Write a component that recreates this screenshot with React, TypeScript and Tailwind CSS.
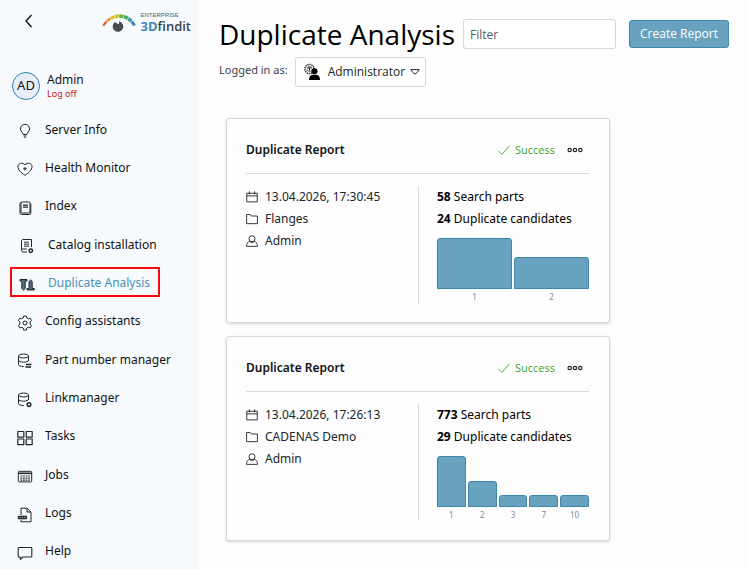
import type { ReactNode } from 'react';

type IconProps = { children: ReactNode; className?: string; width?: string };

function Icon({ children, className = 'size-4', width = '1' }: IconProps) {
  return (
    <svg
      viewBox="0 0 16 16"
      className={className}
      fill="none"
      stroke="currentColor"
      strokeWidth={width}
      strokeLinejoin="round"
      aria-hidden="true"
    >
      {children}
    </svg>
  );
}

const database = (
  <>
    <ellipse cx="6.5" cy="3" rx="5" ry="2" />
    <path d="M1.5 3v8.5c0 1.2 2 2 5 2h.5M11.5 3v5M1.5 7.2c0 1.2 2.2 2 5 2s5-.8 5-2" />
  </>
);

const navItems: { label: string; icon: ReactNode; nested?: boolean; active?: boolean }[] = [
  {
    label: 'Server Info',
    icon: <path d="M6.2 11.5C6.2 9.5 3.4 8.8 3.4 5.9a4.6 4.6 0 0 1 9.2 0c0 2.9-2.8 3.6-2.8 5.6zM6.6 13h2.8M7.3 14.4h1.4" />,
  },
  {
    label: 'Health Monitor',
    icon: <path d="M8 14.3C4 11.6 1 9 1 5.6 1 2 5.6 1 8 3.8 10.4 1 15 2 15 5.6c0 3.4-3 6-7 8.7zM8 6v3.6M6.2 7.8h3.6" />,
  },
  {
    label: 'Index',
    icon: (
      <>
        <rect x="4" y="2" width="9" height="11" rx="1" />
        <path d="M4 2.5c-.8 0-1 .6-1 1.2V13c0 .9.6 1.5 1.4 1.5h8.2c.8 0 1.2-.5 1.2-1.3V3.5" />
        <path d="M6 5.2h5M6 7.2h5" strokeWidth="1.3" />
      </>
    ),
  },
  {
    label: 'Catalog installation',
    nested: true,
    icon: (
      <>
        <path d="M8 14H4c-1 0-1.5-.6-1.5-1.5V3.2c0-1 .5-1.7 1.5-1.7h8.5V9M2.5 12.2c0-.8.6-1.2 1.5-1.2h4" />
        <path d="M5 4.2h5M5 6.2h5M5 8.2h5" />
        <circle cx="11.8" cy="12.8" r="1.7" strokeWidth="1.5" />
      </>
    ),
  },
  {
    label: 'Duplicate Analysis',
    nested: true,
    active: true,
    icon: (
      <>
        <path d="M1 3.5h7V5H6.2v7.5L4.5 14l-1.7-1.5V5H1z" fill="#4f7489" />
        <path d="M8 14v-1.5h2v-7L11.6 4l1.6 1.5v7h2V14z" fill="#4f7489" />
      </>
    ),
  },
  {
    label: 'Config assistants',
    icon: (
      <>
        <path d="M6.6 1h2.8l.4 2 1.5.8 1.9-.7 1.4 2.4-1.5 1.4v2.2l1.5 1.4-1.4 2.4-1.9-.7-1.5.8-.4 2H6.6l-.4-2-1.5-.8-1.9.7-1.4-2.4 1.5-1.4V6.9L1.4 5.5l1.4-2.4 1.9.7L6.2 3z" />
        <circle cx="8" cy="8" r="2" />
      </>
    ),
  },
  {
    label: 'Part number manager',
    icon: (
      <>
        {database}
        <path d="M9 11.5h5.5M8.5 14h5.5" strokeWidth="1.5" />
      </>
    ),
  },
  {
    label: 'Linkmanager',
    icon: (
      <>
        {database}
        <circle cx="12" cy="12.6" r="1.8" strokeWidth="1.5" />
      </>
    ),
  },
  {
    label: 'Tasks',
    icon: <path d="M.8 1.5h6v5.6h-6zM9.2 1.5h6v5.6h-6zM.8 9h6v5.6h-6zM9.2 9h6v5.6h-6z" strokeWidth="1.2" />,
  },
  {
    label: 'Jobs',
    icon: (
      <>
        <rect x="1.3" y="3.3" width="13.4" height="10.6" rx="1" />
        <path d="M1.3 5.3h13.4" strokeWidth="1.6" />
        <path d="M3.4 8h9.4M3.4 10.1h9.4M3.4 12.2h9.4" strokeWidth="1.2" strokeDasharray="1.8 .8" />
      </>
    ),
  },
  {
    label: 'Logs',
    icon: (
      <>
        <path d="M4 8V1.2h6L14 5v9.8H4V13M10 1.2V5h4" />
        <rect x="1.2" y="9.2" width="8.4" height="2.6" fill="currentColor" />
        <path d="M2.4 10.5h1.2M4.8 10.5h1.2M7.2 10.5h1.2" stroke="#9aa4aa" />
      </>
    ),
  },
  {
    label: 'Help',
    icon: <path d="M2 2.5h12c.5 0 .8.3.8.8v7.9c0 .5-.3.8-.8.8H6l-2.6 2.4V12H2c-.5 0-.8-.3-.8-.8V3.3c0-.5.3-.8.8-.8z" strokeWidth="1.1" />,
  },
];

const reports = [
  {
    date: '13.04.2026, 17:30:45',
    source: 'Flanges',
    user: 'Admin',
    parts: 58,
    candidates: 24,
    bars: [
      { label: '1', value: 51 },
      { label: '2', value: 32 },
    ],
  },
  {
    date: '13.04.2026, 17:26:13',
    source: 'CADENAS Demo',
    user: 'Admin',
    parts: 773,
    candidates: 29,
    bars: [
      { label: '1', value: 51 },
      { label: '2', value: 26 },
      { label: '3', value: 12 },
      { label: '7', value: 12 },
      { label: '10', value: 12 },
    ],
  },
];

function Logo() {
  return (
    <a href="#" className="flex items-start gap-1" aria-label="Enterprise 3Dfindit">
      <svg viewBox="0 0 34 20" className="mt-px h-5 w-[34px]" fill="none" strokeWidth="3.6" aria-hidden="true">
        <path d="M1.3 12.8Q2.6 10.4 4.6 8.5" stroke="#e8502e" strokeWidth="2" />
        <path d="M5 8.2Q6.6 6.6 8.4 5.5" stroke="#f08a24" strokeWidth="2.6" />
        <path d="M8.9 5.2Q10.7 4.2 12.6 3.6" stroke="#e5bd22" strokeWidth="3" />
        <path d="M13.1 3.4Q15 3 16.8 3" stroke="#b8c92c" />
        <path d="M17.3 3Q19.4 3 21.4 3.5" stroke="#6cb544" />
        <path d="M21.9 3.6Q24 4.3 25.8 5.3" stroke="#45a860" />
        <path d="M26.2 5.6Q28 6.7 29.3 8.1" stroke="#3f9d9c" />
        <path d="M29.6 8.5Q31.4 10.3 32.4 12.6" stroke="#3d86b5" strokeWidth="3" />
        <path d="M17 8.3v3l-2-.8-2-1.4A5.3 5.3 0 1 0 17 8.3z" fill="#464c52" />
      </svg>
      <span className="flex flex-col">
        <span className="font-['Liberation_Sans',sans-serif] text-[6px] leading-[7px] text-[#5b6166]">ENTERPRISE</span>
        <span className="font-['Open_Sans',sans-serif] text-[13px] leading-[14px] font-semibold text-[#3c4248]">
          <span className="font-bold text-[#3f8ab8]">3D</span>findit
        </span>
      </span>
    </a>
  );
}

function Sidebar() {
  return (
    <aside className="flex w-[197px] shrink-0 flex-col border-r border-[#f1f5f7] bg-[#f6fafc]">
      <div className="flex h-[34px] items-start justify-between pt-3 pr-[5px] pl-[21px]">
        <button type="button" aria-label="Back" className="pt-px">
          <Icon className="size-4" width="1.4">
            <path d="M10.5 2 5 8l5.5 6" />
          </Icon>
        </button>
        <Logo />
      </div>

      {/* User */}
      <div className="mt-[38px] flex items-center gap-[7px] pl-3">
        <span className="flex size-7 items-center justify-center rounded-full border border-[#2f80b0] bg-[#e8eef8] text-[13px]">
          AD
        </span>
        <div className="flex flex-col items-start">
          <span className="text-xs leading-4">Admin</span>
          <button type="button" className="text-[9px] leading-3 text-[#c8150f]">
            Log off
          </button>
        </div>
      </div>

      {/* Navigation */}
      <nav className="mt-[11px] flex-1">
        <ul className="flex h-full flex-col justify-between">
          {navItems.map((item) => (
            <li key={item.label} className="flex h-9 items-center">
              <a
                href="#"
                className={
                  item.active
                    ? 'ml-[10px] flex h-[30px] w-[150px] items-center border-2 border-[#f5090d] pl-[7px] text-[#4a90b8]'
                    : item.nested
                      ? 'flex items-center pl-[19px]'
                      : 'flex items-center pl-[17px]'
                }
              >
                <Icon className={item.nested ? 'mt-1 mr-[13px] size-4 shrink-0 text-[#20262a]' : 'mt-1 mr-3 size-4 shrink-0 text-[#20262a]'}>
                  {item.icon}
                </Icon>
                <span className="pt-px text-xs leading-5 whitespace-nowrap">{item.label}</span>
              </a>
            </li>
          ))}
        </ul>
      </nav>
    </aside>
  );
}

function ReportCard({ report }: { report: (typeof reports)[number] }) {
  return (
    <article className="rounded-[3px] border border-[#d6d8d9] bg-[#fdfdfd] pr-5 pb-[19px] pl-[19px] shadow-[0_1px_3px_rgba(0,0,0,0.16)]">
      <header className="flex items-center border-b border-[#d6d8d9] pt-5 pb-3">
        <h2 className="flex-1 text-xs leading-[22px] font-semibold">Duplicate Report</h2>
        <span className="flex items-center gap-1 font-['Open_Sans',sans-serif] text-[11px] leading-[22px] text-[#38a71c]">
          <Icon className="size-[14px]">
            <path d="M1.5 9 5.5 13 14.5 3" />
          </Icon>
          Success
        </span>
        <button type="button" aria-label="More" className="mr-[6px] ml-3">
          <svg viewBox="0 0 16 6" className="h-[6px] w-4" fill="none" stroke="#22262a" strokeWidth="1.2" aria-hidden="true">
            <circle cx="2.7" cy="3" r="1.7" />
            <circle cx="8" cy="3" r="1.7" />
            <circle cx="13.3" cy="3" r="1.7" />
          </svg>
        </button>
      </header>

      <div className="mt-3 flex text-xs leading-[22px]">
        <ul className="flex-1 border-r border-[#d6d8d9] text-[#20262a]">
          <li className="flex items-center gap-[7px]">
            <Icon className="size-3" width="1.2">
              <path d="M1 3h14v11.5H1zM1 6.5h14M4.5 .5v4M11.5 .5v4" />
            </Icon>
            {report.date}
          </li>
          <li className="flex items-center gap-[7px]">
            <Icon className="size-3" width="1.2">
              <path d="M.8 2h4.7L7 4h8.2v10.2H.8z" />
            </Icon>
            {report.source}
          </li>
          <li className="flex items-center gap-[7px]">
            <Icon className="size-3" width="1.2">
              <circle cx="8" cy="5" r="4" />
              <path d="M5 8.5C2 9.2.8 11 .8 15.2h14.4c0-4.2-1.2-6-4.2-6.7M5 8.5c1.5 2 4.5 2 6 0" />
            </Icon>
            {report.user}
          </li>
        </ul>

        <div className="w-[170px] pl-[18px] text-black">
          <p>
            <b>{report.parts}</b> Search parts
          </p>
          <p>
            <b>{report.candidates}</b> Duplicate candidates
          </p>
          <div className="mt-2 flex items-end gap-[2px]">
            {report.bars.map((bar) => (
              <div key={bar.label} className="flex-1">
                <div
                  className="rounded-t-[3px] border border-[#3d86ae] bg-[#68a2bf]"
                  style={{ height: bar.value }}
                />
                <div className="mt-px text-center text-[8px] leading-[13px] text-[#868c90]">{bar.label}</div>
              </div>
            ))}
          </div>
        </div>
      </div>
    </article>
  );
}

export default function App() {
  return (
    <div className="flex min-h-screen bg-[#fdfdfd] font-['Noto_Sans',sans-serif] text-[#101214]">
      <Sidebar />

      <main className="min-w-0 flex-1">
        <div className="flex items-center pt-[19px] pr-[21px] pl-[22px]">
          <h1 className="mr-2 font-['Open_Sans',sans-serif] text-[28px] leading-[30px] font-medium whitespace-nowrap text-black">
            Duplicate Analysis
          </h1>
          <input
            type="text"
            aria-label="Filter"
            placeholder="Filter"
            className="h-[30px] min-w-0 flex-1 rounded-[3px] border border-[#d6d8d9] bg-white px-[6px] font-['Open_Sans',sans-serif] text-xs placeholder:text-[#555b60]"
          />
          <button
            type="button"
            className="ml-[13px] h-7 w-[100px] rounded-[3px] border border-[#3d8ab0] bg-[#68a2bf] font-['Open_Sans',sans-serif] text-xs font-medium whitespace-nowrap text-white"
          >
            Create Report
          </button>
        </div>

        <div className="mt-2 flex items-start pl-[22px]">
          <label htmlFor="role" className="mr-[7px] pt-1 text-[11px] leading-[18px] text-[#3c4248]">
            Logged in as:
          </label>
          <div className="relative">
            <svg viewBox="0 0 18 18" className="pointer-events-none absolute top-[6px] left-2 size-[18px]" aria-hidden="true">
              <circle cx="6.5" cy="6" r="4.6" fill="none" stroke="#222" strokeWidth="1.5" strokeDasharray="1.3 .8" />
              <circle cx="6.5" cy="6" r="2.6" fill="none" stroke="#555" strokeWidth=".8" />
              <path d="M5 4.8h3M6.5 4.8v3" stroke="#222" />
              <circle cx="11.5" cy="8.2" r="3" />
              <path d="M6 17c0-3.2 1.4-4.7 3.5-5.2h4c2.1.5 3.5 2 3.5 5.2z" />
            </svg>
            <select
              id="role"
              className="h-[30px] w-[131px] appearance-none rounded-[3px] border border-[#d6d8d9] bg-white pr-4 pl-8 font-['Open_Sans',sans-serif] text-xs text-[#20262a]"
            >
              <option>Administrator</option>
            </select>
            <svg viewBox="0 0 10 6" className="pointer-events-none absolute top-3 right-[6px] h-[6px] w-[10px]" fill="none" stroke="#22262a" aria-hidden="true">
              <path d="M.8.6h8.4L7.4 3.2 5 5.2 2.6 3.2z" />
            </svg>
          </div>
        </div>

        <section className="mt-[31px] ml-[29px] flex max-w-[384px] flex-col gap-[13px]">
          {reports.map((report) => (
            <ReportCard key={report.date} report={report} />
          ))}
        </section>
      </main>
    </div>
  );
}
